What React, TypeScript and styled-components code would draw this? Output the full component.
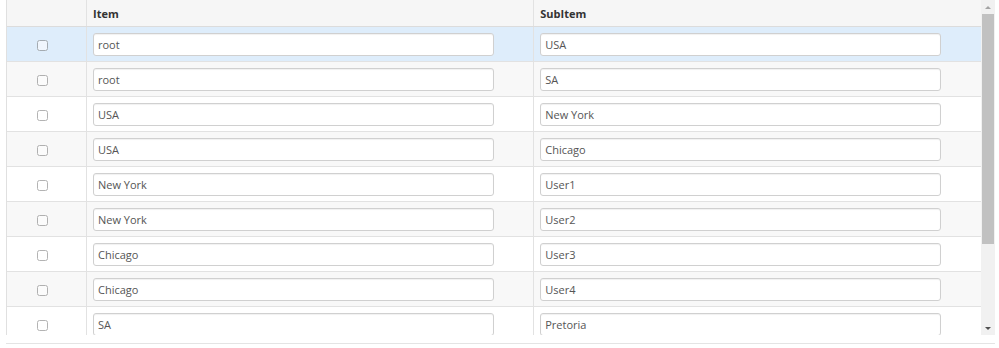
import React from 'react';
import styled, { createGlobalStyle } from 'styled-components';

const GlobalStyle = createGlobalStyle`
  html, body {
    margin: 0;
    padding: 0;
    background: #fff;
  }
  body {
    font-family: "Open Sans", "Liberation Sans", Arial, sans-serif;
    font-size: 11px;
    color: #333;
  }
`;

const Frame = styled.div`
  margin-left: 6px;
  width: 989px;
  border-bottom: 1px solid #e4e4e4;
  padding-bottom: 8px;
`;

const Scroller = styled.div`
  display: flex;
  height: 335px;
`;

const Viewport = styled.div`
  flex: 1;
  overflow: hidden;
  border-left: 1px solid #e0e0e0;
`;

const ScrollBar = styled.div`
  width: 14px;
  display: flex;
  flex-direction: column;
  background: #f1f1f1;
`;

const ArrowButton = styled.div<{ down?: boolean }>`
  height: 14px;
  display: flex;
  align-items: center;
  justify-content: center;
  &::after {
    content: '';
    width: 0;
    height: 0;
    border-left: 3px solid transparent;
    border-right: 3px solid transparent;
    ${p =>
      p.down
        ? 'border-top: 3px solid #505050;'
        : 'border-bottom: 3px solid #a3a3a3;'}
  }
`;

const Track = styled.div`
  flex: 1;
  display: flex;
  flex-direction: column;
  padding: 0 1px;
`;

const Thumb = styled.div`
  background: #c1c1c1;
`;

const Table = styled.table`
  width: 100%;
  border-collapse: collapse;
  table-layout: fixed;
`;

const HeadCell = styled.th<{ w?: number }>`
  ${p => (p.w ? `width: ${p.w}px;` : '')}
  height: 26px;
  padding: 0 6px;
  text-align: left;
  font-weight: 700;
  font-size: 11px;
  color: #333;
  background: #f6f6f6;
  border-right: 1px solid #e2e2e2;
  border-bottom: 1px solid #dcdcdc;
  &:last-child {
    border-right: none;
  }
`;

const Row = styled.tr<{ selected?: boolean; striped?: boolean }>`
  background: ${p => (p.selected ? '#deedfb' : p.striped ? '#f8f8f8' : '#fff')};
`;

const Cell = styled.td`
  height: 34px;
  padding: 0 6px;
  border-right: 1px solid #e2e2e2;
  border-bottom: 1px solid #e2e2e2;
  vertical-align: middle;
  &:last-child {
    border-right: none;
  }
`;

const CheckCell = styled(Cell)`
  text-align: center;
  padding-right: 14px;
`;

const Check = styled.input`
  width: 11px;
  height: 11px;
  margin: 0;
  vertical-align: middle;
  opacity: 0.55;
`;

const TextInput = styled.input`
  box-sizing: border-box;
  width: 401px;
  height: 23px;
  padding: 0 4px;
  border: 1px solid #d0d0d0;
  border-radius: 3px;
  box-shadow: inset 0 1px 1px rgba(0, 0, 0, 0.06);
  background: #fff;
  font-family: "Open Sans", "Liberation Sans", Arial, sans-serif;
  font-size: 11px;
  color: #555;
  outline: none;
`;

const rows: [string, string][] = [
  ['root', 'USA'],
  ['root', 'SA'],
  ['USA', 'New York'],
  ['USA', 'Chicago'],
  ['New York', 'User1'],
  ['New York', 'User2'],
  ['Chicago', 'User3'],
  ['Chicago', 'User4'],
  ['SA', 'Pretoria'],
  ['SA', 'Cape Town'],
  ['Pretoria', 'User5'],
  ['Cape Town', 'User6'],
];

// visible part of the list vs. everything, for the thumb size
const visibleHeight = 335;
const contentHeight = 27 + rows.length * 35;

const App: React.FC = () => {
  const ratio = Math.min(1, visibleHeight / contentHeight);

  return (
    <>
      <GlobalStyle />
      <Frame>
        <Scroller>
          <Viewport>
            <Table>
              <thead>
                <tr>
                  <HeadCell w={67} />
                  <HeadCell>Item</HeadCell>
                  <HeadCell>SubItem</HeadCell>
                </tr>
              </thead>
              <tbody>
                {rows.map(([item, sub], i) => (
                  <Row key={i} selected={i === 0} striped={i % 2 === 1}>
                    <CheckCell>
                      <Check type="checkbox" />
                    </CheckCell>
                    <Cell>
                      <TextInput defaultValue={item} />
                    </Cell>
                    <Cell>
                      <TextInput defaultValue={sub} />
                    </Cell>
                  </Row>
                ))}
              </tbody>
            </Table>
          </Viewport>
          <ScrollBar>
            <ArrowButton />
            <Track>
              <Thumb style={{ height: `${ratio * 100}%` }} />
            </Track>
            <ArrowButton down />
          </ScrollBar>
        </Scroller>
      </Frame>
    </>
  );
};

export default App;
